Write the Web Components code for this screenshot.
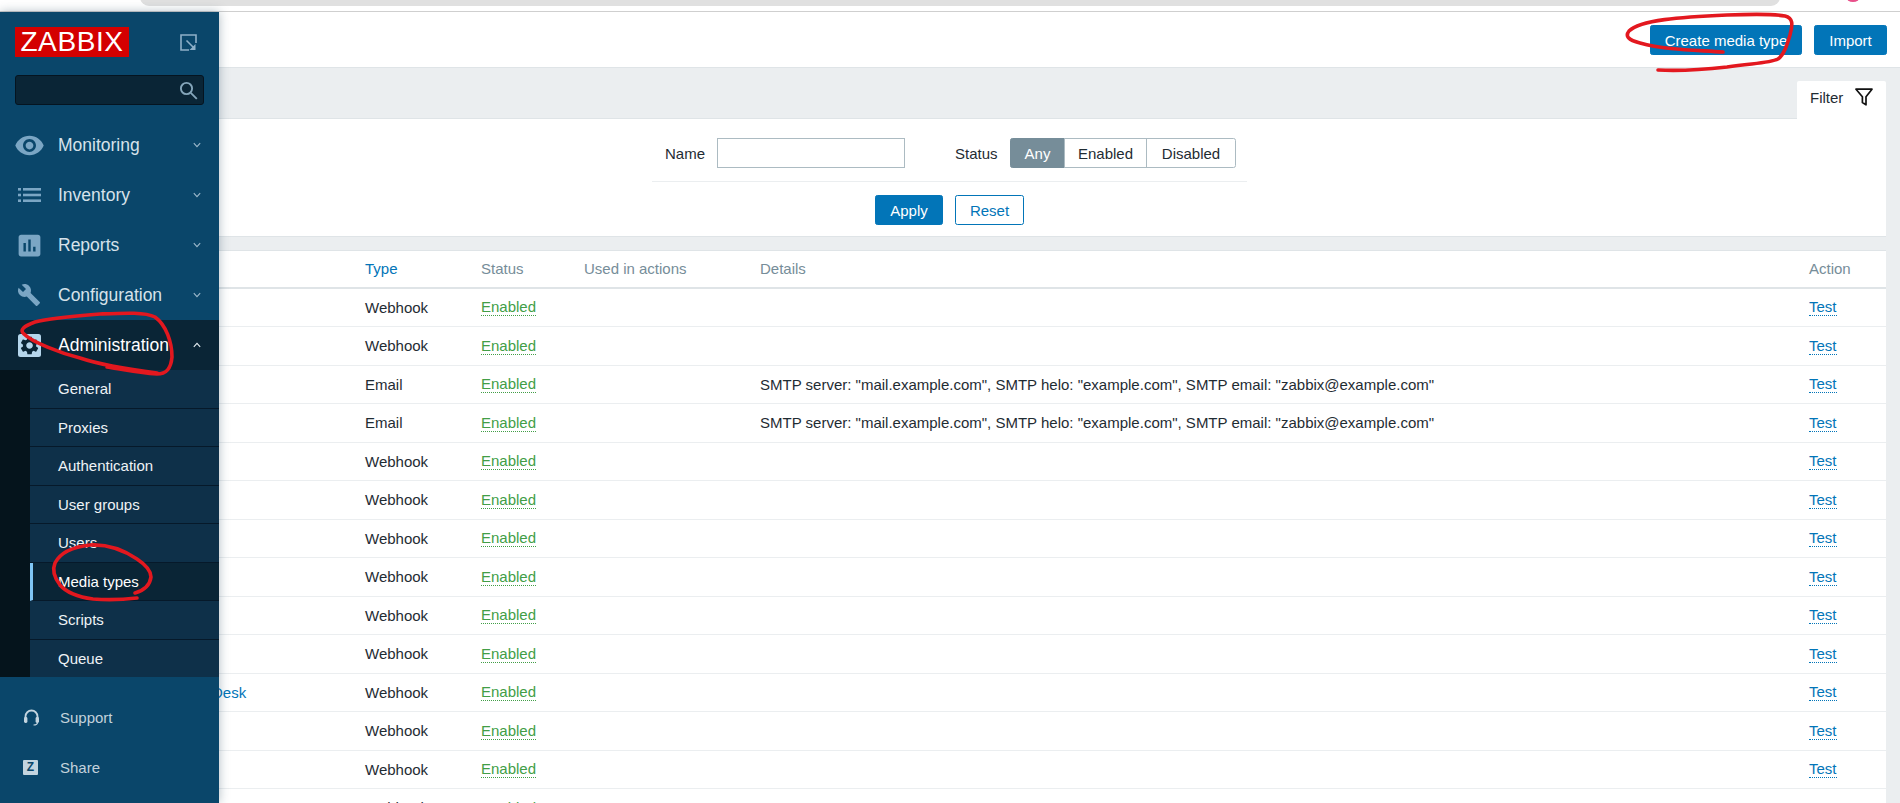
<!DOCTYPE html>
<html lang="en">
<head>
<meta charset="utf-8">
<title>Media types</title>
<style>
  html, body { margin: 0; height: 803px; overflow: hidden; background: #ebeef0; }
  body { font: 15px "Liberation Sans", Arial, sans-serif; color: #1f2c33; }
  zbx-app { height: 803px; }
</style>
</head>
<body>
<zbx-app>
  <browser-strip slot="top"></browser-strip>
  <zbx-sidebar slot="side">
    <nav-item label="Monitoring" icon="eye"></nav-item>
    <nav-item label="Inventory" icon="list"></nav-item>
    <nav-item label="Reports" icon="bars"></nav-item>
    <nav-item label="Configuration" icon="wrench"></nav-item>
    <nav-item label="Administration" icon="gear" open></nav-item>
    <sub-item>General</sub-item>
    <sub-item>Proxies</sub-item>
    <sub-item>Authentication</sub-item>
    <sub-item>User groups</sub-item>
    <sub-item>Users</sub-item>
    <sub-item active>Media types</sub-item>
    <sub-item>Scripts</sub-item>
    <sub-item last>Queue</sub-item>
  </zbx-sidebar>
  <zbx-page slot="main">
    <zbx-header>
      <zbx-btn style="width:152px">Create media type</zbx-btn>
      <zbx-btn style="width:73px">Import</zbx-btn>
    </zbx-header>
    <zbx-filter></zbx-filter>
    <zbx-table>
      <zbx-row type="Webhook"></zbx-row>
      <zbx-row type="Webhook"></zbx-row>
      <zbx-row type="Email" details='SMTP server: "mail.example.com", SMTP helo: "example.com", SMTP email: "zabbix@example.com"'></zbx-row>
      <zbx-row type="Email" details='SMTP server: "mail.example.com", SMTP helo: "example.com", SMTP email: "zabbix@example.com"'></zbx-row>
      <zbx-row type="Webhook"></zbx-row>
      <zbx-row type="Webhook"></zbx-row>
      <zbx-row type="Webhook"></zbx-row>
      <zbx-row type="Webhook"></zbx-row>
      <zbx-row type="Webhook"></zbx-row>
      <zbx-row type="Webhook"></zbx-row>
      <zbx-row type="Webhook" name="Desk"></zbx-row>
      <zbx-row type="Webhook"></zbx-row>
      <zbx-row type="Webhook"></zbx-row>
      <zbx-row type="Webhook"></zbx-row>
    </zbx-table>
  </zbx-page>
  <red-marks slot="marks"></red-marks>
</zbx-app>

<script>
const ICONS = {
  eye: `<svg width="31" height="31" viewBox="0 0 24 24" fill="#7ba6c4"><path d="M12 4.5C7 4.5 2.73 7.61 1 12c1.73 4.39 6 7.5 11 7.5s9.27-3.11 11-7.5c-1.73-4.39-6-7.5-11-7.5zM12 17c-2.76 0-5-2.24-5-5s2.24-5 5-5 5 2.24 5 5-2.24 5-5 5zm0-8c-1.66 0-3 1.34-3 3s1.34 3 3 3 3-1.34 3-3-1.34-3-3-3z"/></svg>`,
  list: `<svg width="23" height="14" viewBox="0 0 23 14" fill="#7ba6c4"><rect x="0" y="0" width="3" height="2.6"/><rect x="0" y="5.7" width="3" height="2.6"/><rect x="0" y="11.4" width="3" height="2.6"/><rect x="5" y="0" width="18" height="2.6"/><rect x="5" y="5.7" width="18" height="2.6"/><rect x="5" y="11.4" width="18" height="2.6"/></svg>`,
  bars: `<svg width="29" height="29" viewBox="0 0 24 24" fill="#7ba6c4"><path d="M19 3H5c-1.1 0-2 .9-2 2v14c0 1.1.9 2 2 2h14c1.1 0 2-.9 2-2V5c0-1.1-.9-2-2-2zM9 17H7v-7h2v7zm4 0h-2V7h2v10zm4 0h-2v-4h2v4z"/></svg>`,
  wrench: `<svg width="24" height="24" viewBox="0 0 24 24" fill="#7ba6c4"><path d="M22.7 19l-9.1-9.1c.9-2.3.4-5-1.5-6.9-2-2-5-2.4-7.4-1.3L9 6 6 9 1.6 4.7C.4 7.1.9 10.1 2.9 12.1c1.9 1.9 4.6 2.4 6.9 1.5l9.1 9.1c.4.4 1 .4 1.4 0l2.3-2.3c.5-.4.5-1.1.1-1.4z"/></svg>`,
  gear: `<svg width="23" height="23" viewBox="0 0 23 23"><rect width="23" height="23" rx="2.5" fill="#b5d6ec"/><g transform="translate(.5 .5) scale(.92)"><path fill="#0a2536" d="M19.14 12.94c.04-.3.06-.61.06-.94 0-.32-.02-.64-.07-.94l2.03-1.58c.18-.14.23-.41.12-.61l-1.92-3.32c-.12-.22-.37-.29-.59-.22l-2.39.96c-.5-.38-1.03-.7-1.62-.94l-.36-2.54c-.04-.24-.24-.41-.48-.41h-3.84c-.24 0-.43.17-.47.41l-.36 2.54c-.59.24-1.13.57-1.62.94l-2.39-.96c-.22-.08-.47 0-.59.22L2.74 8.87c-.12.21-.08.47.12.61l2.03 1.58c-.05.3-.09.63-.09.94s.02.64.07.94l-2.03 1.58c-.18.14-.23.41-.12.61l1.92 3.32c.12.22.37.29.59.22l2.39-.96c.5.38 1.03.7 1.62.94l.36 2.54c.05.24.24.41.48.41h3.84c.24 0 .44-.17.47-.41l.36-2.54c.59-.24 1.13-.56 1.62-.94l2.39.96c.22.08.47 0 .59-.22l1.92-3.32c.12-.22.07-.47-.12-.61l-2.01-1.58zM12 15.6c-1.98 0-3.6-1.62-3.6-3.6s1.62-3.6 3.6-3.6 3.6 1.62 3.6 3.6-1.62 3.6-3.6 3.6z"/></g></svg>`
};

function define(name, css, html) {
  customElements.define(name, class extends HTMLElement {
    constructor() {
      super();
      this.attachShadow({ mode: 'open' });
    }
    connectedCallback() {
      const body = typeof html === 'function' ? html(this) : html;
      this.shadowRoot.innerHTML = `<style>${css}</style>${body}`;
    }
  });
}

define('zbx-app', `
  :host { display: block; position: relative; width: 1900px; overflow: hidden; }
  .cols { display: flex; align-items: stretch; height: 791px; }
  .side { position: relative; z-index: 2; flex: 0 0 219px; display: flex; }
  .main { flex: 1 1 0; min-width: 0; display: flex; }
`, `<slot name="top"></slot>
  <div class="cols">
    <div class="side"><slot name="side"></slot></div>
    <div class="main"><slot name="main"></slot></div>
  </div>
  <slot name="marks"></slot>`);

define('browser-strip', `
  :host { display: block; position: relative; height: 12px; box-sizing: border-box; background: #fff; border-bottom: 1px solid #cfcfcf; overflow: hidden; }
  .pill { position: absolute; left: 140px; width: 1640px; top: -12px; height: 18px; background: #e0e0e0; border-radius: 9px; }
  .dot { position: absolute; left: 1846px; top: -9px; width: 14px; height: 11px; background: #e8508a; border-radius: 50%; }
`, `<div class="pill"></div><div class="dot"></div>`);

define('zbx-sidebar', `
  :host { display: flex; flex-direction: column; width: 219px; height: 791px; background: #0a466a; box-shadow: 0 0 10px rgba(30,60,80,.35); color: #dbe6ee; }
  .head { display: flex; align-items: center; justify-content: space-between; padding: 15px 22px 0 15px; }
  .logo { width: 114px; height: 30px; box-sizing: border-box; background: #d40000; color: #fff; font: 28px/30px "Liberation Sans", Arial, sans-serif; letter-spacing: .6px; text-align: center; overflow: hidden; }
  .search { margin: 18px 15px 15px; height: 30px; box-sizing: border-box; background: #0a2536; border: 1px solid #051420; border-radius: 3px; display: flex; align-items: center; justify-content: flex-end; padding-right: 5px; }
  .sub { display: flex; flex-direction: column; flex: 0 0 307px; background: #05141c; }
  .foot { flex: 1; padding-top: 15px; }
  .foot div { height: 50px; display: flex; align-items: center; font-size: 15px; color: #c3d2dc; padding-left: 23px; box-sizing: border-box; }
  .foot .ic { width: 37px; flex: none; display: block; }
  .z { width: 15px; height: 15px; margin-right: 22px; flex: none; background: #c3d4df; color: #0a466a; font: bold 12px/15px "Liberation Sans", Arial, sans-serif; text-align: center; border-radius: 1px; }
`, () => `
  <div class="head">
    <div class="logo">ZABBIX</div>
    <svg width="17" height="17" viewBox="0 0 17 17" fill="none" stroke="#8eb0c8" stroke-width="1.6"><path d="M9 16H1V1h15v8"/><path d="M6.5 6.5l7 7"/><path d="M15.5 10v6h-6z" fill="#8eb0c8" stroke="none"/></svg>
  </div>
  <div class="search"><svg width="19" height="19" viewBox="0 0 19 19" fill="none" stroke="#84a5ba" stroke-width="1.9"><circle cx="7.5" cy="7.5" r="5.6"/><path d="M11.8 11.8l6 6"/></svg></div>
  <slot name="nav"></slot>
  <div class="sub"><slot></slot></div>
  <div class="foot">
    <div><svg class="ic" viewBox="0 0 37 17" height="17" fill="none"><path d="M2.5 11V7.5a6 6 0 0 1 12 0V11" stroke="#c3d4df" stroke-width="1.8"/><rect x="1" y="8" width="3.4" height="6" rx="1.4" fill="#c3d4df"/><rect x="12.6" y="8" width="3.4" height="6" rx="1.4" fill="#c3d4df"/><path d="M14.5 13.5c0 2-2 2.5-4 2.5" stroke="#c3d4df" stroke-width="1.2"/></svg>Support</div>
    <div><span class="z">Z</span>Share</div>
  </div>`);

define('nav-item', `
  :host { display: flex; align-items: center; height: 50px; box-sizing: border-box; font-size: 17.5px; color: #d6e2ea; position: relative; }
  :host([open]) { background: #0a2536; color: #fff; }
  .ic { width: 58px; flex: none; display: flex; justify-content: center; box-sizing: border-box; }
  .t { flex: 1; }
  .ch { margin-right: 18px; }
`, (el) => {
  el.slot = 'nav';
  const open = el.hasAttribute('open');
  return `<span class="ic">${ICONS[el.getAttribute('icon')]}</span>
    <span class="t">${el.getAttribute('label')}</span>
    <svg class="ch" width="8" height="6" viewBox="0 0 8 6" fill="none" stroke="${open ? '#e6eef3' : '#9db9cc'}" stroke-width="1.1"><path d="${open ? 'M.8 4.8L4 1.4l3.2 3.4' : 'M.8 1.2L4 4.6l3.2-3.4'}"/></svg>`;
});

define('sub-item', `
  :host { display: flex; align-items: center; flex: 1 1 0; box-sizing: border-box; margin-left: 30px; padding-left: 28px; font-size: 15px; color: #eef3f6; background: #0e3049; border-bottom: 1px solid #06192a; }
  :host([active]) { background: #0a2536; border-left: 3px solid #7fc6f5; padding-left: 25px; color: #fff; }
  :host([last]) { border-bottom: 0; }
`, `<slot></slot>`);

define('zbx-page', `
  :host { display: flex; flex-direction: column; flex: 1; min-width: 0; background: #ebeef0; overflow: hidden; }
  ::slotted(*) { flex: none; }
`, `<slot></slot>`);

define('zbx-header', `
  :host { display: flex; justify-content: flex-end; align-items: center; gap: 12px; height: 56px; box-sizing: border-box; padding: 1px 13px 0 0; background: #fff; border-bottom: 1px solid #dfe4e7; }
`, `<slot></slot>`);

define('zbx-btn', `
  :host { display: inline-flex; align-items: center; justify-content: center; height: 30px; box-sizing: border-box; background: #0275b8; border: 1px solid #0275b8; border-radius: 2.4px; color: #fff; font-size: 15px; }
  :host([alt]) { background: #fff; color: #0275b8; }
`, `<slot></slot>`);

define('zbx-filter', `
  :host { display: block; margin-right: 14px; }
  .band { height: 51px; display: flex; justify-content: flex-end; align-items: flex-end; border-bottom: 1px solid #dfe4e7; box-sizing: border-box; }
  .tab { width: 89px; height: 38px; margin-bottom: -1px; box-sizing: border-box; background: #fff; border-radius: 2px 2px 0 0; display: flex; align-items: center; padding: 0 13px 6px 13px; justify-content: space-between; position: relative; }
  .panel { background: #fff; height: 118px; box-sizing: border-box; border-bottom: 1px solid #dfe4e7; padding: 19px 0 0 433px; }
  .form { width: 595px; }
  .row { display: flex; align-items: center; height: 30px; padding-left: 13px; }
  .l1 { width: 52px; flex: none; }
  .l2 { width: 55px; flex: none; }
  .input { width: 188px; height: 30px; box-sizing: border-box; border: 1px solid #acbbc2; margin-right: 50px; background: #fff; flex: none; }
  .seg { display: flex; height: 30px; }
  .seg span { display: flex; align-items: center; justify-content: center; box-sizing: border-box; border: 1px solid #acbbc2; margin-left: -1px; height: 30px; }
  .seg span:first-child { width: 55px; margin-left: 0; background: #768d99; border-color: #768d99; color: #fff; border-radius: 2.4px 0 0 2.4px; }
  .seg span:nth-child(2) { width: 83px; }
  .seg span:nth-child(3) { width: 90px; border-radius: 0 2.4px 2.4px 0; }
  .rule { height: 1px; background: #ebeef0; margin: 13px 0 13px; }
  .acts { display: flex; justify-content: center; gap: 12px; }
  .a { width: 68px; }
  .r { width: 69px; }
`, `<div class="band"><div class="tab"><span>Filter</span>
    <svg width="18" height="18" viewBox="0 0 18 18" fill="none" stroke="#111" stroke-width="1.7" stroke-linejoin="round"><path d="M1 1.2h16l-6 7.5V16.8l-3.6-2.2V8.7z"/></svg>
  </div></div>
  <div class="panel"><div class="form">
    <div class="row"><span class="l1">Name</span><div class="input"></div><span class="l2">Status</span>
      <div class="seg"><span>Any</span><span>Enabled</span><span>Disabled</span></div></div>
    <div class="rule"></div>
    <div class="acts"><zbx-btn class="a">Apply</zbx-btn><zbx-btn class="r" alt>Reset</zbx-btn></div>
  </div></div>`);

const GRID = 'grid-template-columns: 146px 116px 103px 176px 1fr 77px;';

define('zbx-table', `
  :host { display: block; margin: 13px 14px 0 0; background: #fff; border-top: 1px solid #dfe4e7; }
  .h { display: grid; ${GRID} height: 37.5px; box-sizing: border-box; align-items: center; border-bottom: 2px solid #dfe4e7; color: #768d99; }
  .l { color: #0275b8; }
`, `<div class="h"><span></span><span class="l">Type</span><span>Status</span><span>Used in actions</span><span>Details</span><span>Action</span></div><slot></slot>`);

define('zbx-row', `
  :host { display: grid; ${GRID} height: 38.5px; box-sizing: border-box; align-items: center; border-bottom: 1px solid #ebeef0; }
  .n { color: #0275b8; margin-left: -7px; }
  .dot { line-height: 17px; display: inline-block; border-bottom: 1px dotted; }
  .g { color: #429e47; }
  .b { color: #0275b8; }
  .s { justify-self: start; }
`, (el) => `<span class="n">${el.getAttribute('name') || ''}</span>
  <span>${el.getAttribute('type')}</span>
  <span class="dot g s">Enabled</span>
  <span></span>
  <span>${(el.getAttribute('details') || '').replace(/"/g, '&quot;')}</span>
  <span class="dot b s">Test</span>`);

define('red-marks', `
  :host { position: absolute; left: 0; top: 0; width: 1900px; height: 803px; z-index: 5; pointer-events: none; display: block; }
  svg { display: block; }
  path { fill: none; stroke: #e3181f; stroke-width: 3.6; stroke-linecap: round; stroke-linejoin: round; }
`, `<svg width="1900" height="803" viewBox="0 0 1900 803">
  <path d="M1723 52C1695 50 1665 50 1640 43C1628 40 1625 36 1629 31C1640 20 1680 17 1727 15C1755 14 1775 14 1785 16C1793 18 1793 24 1790 35C1787 45 1784 55 1778 59C1770 63 1755 63 1727 67C1700 70 1675 71 1658 70"/>
  <path d="M107 367C120 369 140 373 157 374C167 374 171 368 172 357C172 342 166 325 155 317C145 312 125 313 100 314C75 316 50 318 35 322C24 326 19 330 24 334C32 342 60 353 80 358C95 363 125 369 157 373"/>
  <path d="M137 598C120 600 105 600 93 599C78 597 66 592 60 585C54 577 52 570 55 563C60 553 72 547 90 545C108 544 125 551 137 559C146 565 151 572 151 577C150 585 145 590 135 593"/>
</svg>`);
</script>
</body>
</html>
